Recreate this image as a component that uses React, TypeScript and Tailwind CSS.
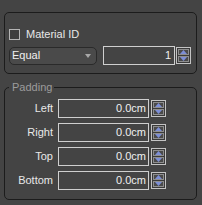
import React from "react";

function Spinner({ h = "h-[17px]" }: { h?: string }) {
  return (
    <div className={`flex w-[15px] ${h} flex-col gap-[1px] border border-[#c4c4c4] bg-[#3a3a3a] p-[1px]`}>
      <div className="flex flex-1 items-center justify-center border border-[#8e8e8e] bg-[#4a4a4a]">
        <svg width="7" height="4" viewBox="0 0 7 4">
          <polygon points="3.5,0 7,4 0,4" fill="#7d8fd6" />
        </svg>
      </div>
      <div className="flex flex-1 items-center justify-center border border-[#8e8e8e] bg-[#4a4a4a]">
        <svg width="7" height="4" viewBox="0 0 7 4">
          <polygon points="0,0 7,0 3.5,4" fill="#7d8fd6" />
        </svg>
      </div>
    </div>
  );
}

function Row({ label }: { label: string }) {
  return (
    <div className="flex h-[19px] items-center">
      <div className="w-[48px] text-right text-[#e8e8e8]">{label}</div>
      <div className="ml-[5px] flex h-[19px] w-[91px] items-center justify-end border border-[#cfcfcf] bg-[#444444] pr-[2px] text-[#f0f0f0]">
        0.0cm
      </div>
      <div className="ml-[2px]">
        <Spinner />
      </div>
    </div>
  );
}

export default function App() {
  return (
    <div
      className="h-[205px] w-[202px] overflow-hidden bg-[#444444] text-[11px] leading-[13px]"
      style={{ fontFamily: '"Liberation Sans", Arial, sans-serif' }}
    >
      <div className="mx-[4px] mt-[12px] w-[193px] rounded-[5px] border border-[#1c1c1c] pb-[8px] pt-[15px]">
        <div className="flex h-[12px] items-center pl-[4px]">
          <div className="h-[11px] w-[11px] border border-[#b5b5b5] bg-[#3e3e3e]" />
          <span className="ml-[6px] text-[#e8e8e8]">Material ID</span>
        </div>
        <div className="mt-[6px] flex h-[19px] items-center pl-[4px]">
          <div className="flex h-[18px] w-[88px] items-center justify-between rounded-[5px] border border-[#2a2a2a] bg-[#4a4a4a] pl-[2px] pr-[5px] text-[#f0f0f0]">
            <span>Equal</span>
            <svg width="6" height="4" viewBox="0 0 6 4">
              <polygon points="0,0 6,0 3,4" fill="#a8a8a8" />
            </svg>
          </div>
          <div className="ml-[6px] flex h-[19px] w-[72px] items-center justify-end border border-[#cfcfcf] bg-[#444444] pr-[3px] text-[#f0f0f0]">
            1
          </div>
          <div className="ml-[1px]">
            <Spinner />
          </div>
        </div>
      </div>
      <fieldset className="mx-[4px] mt-[6px] w-[193px] rounded-[5px] border border-[#1c1c1c] pb-[9px]">
        <legend className="ml-[4px] px-[3px] pr-[2px] leading-[14px] text-[#9c9c9c]">Padding</legend>
        <div className="flex flex-col gap-[5px] pt-[5px]">
          <Row label="Left" />
          <Row label="Right" />
          <Row label="Top" />
          <Row label="Bottom" />
        </div>
      </fieldset>
    </div>
  );
}
